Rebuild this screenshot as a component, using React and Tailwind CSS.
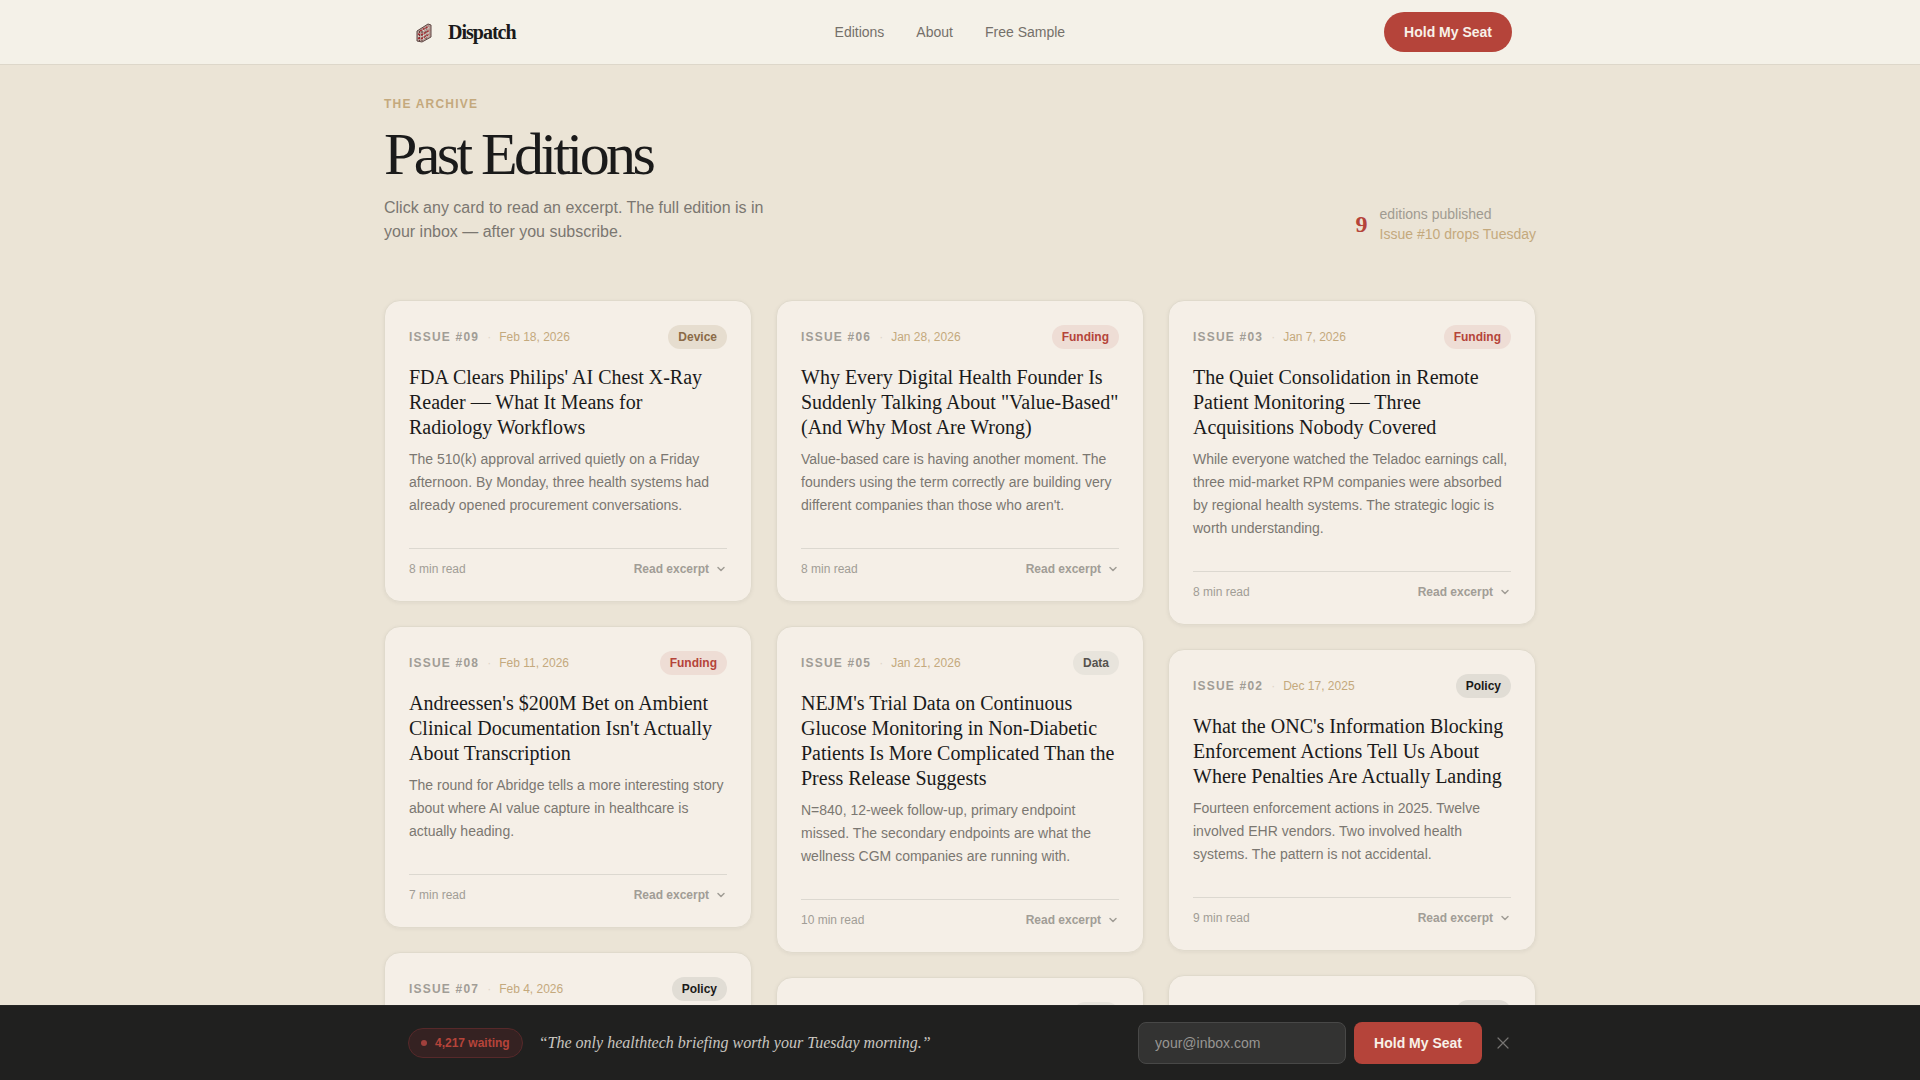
import React from 'react';

const columns = [
  [
    {
      issue: '09',
      date: 'Feb 18, 2026',
      tag: 'Device',
      title: "FDA Clears Philips' AI Chest X-Ray Reader — What It Means for Radiology Workflows",
      text: 'The 510(k) approval arrived quietly on a Friday afternoon. By Monday, three health systems had already opened procurement conversations.',
      minutes: 8
    },
    {
      issue: '08',
      date: 'Feb 11, 2026',
      tag: 'Funding',
      title: "Andreessen's $200M Bet on Ambient Clinical Documentation Isn't Actually About Transcription",
      text: 'The round for Abridge tells a more interesting story about where AI value capture in healthcare is actually heading.',
      minutes: 7
    },
    { issue: '07', date: 'Feb 4, 2026', tag: 'Policy' }
  ],
  [
    {
      issue: '06',
      date: 'Jan 28, 2026',
      tag: 'Funding',
      title: 'Why Every Digital Health Founder Is Suddenly Talking About "Value-Based" (And Why Most Are Wrong)',
      text: "Value-based care is having another moment. The founders using the term correctly are building very different companies than those who aren't.",
      minutes: 8
    },
    {
      issue: '05',
      date: 'Jan 21, 2026',
      tag: 'Data',
      title: "NEJM's Trial Data on Continuous Glucose Monitoring in Non-Diabetic Patients Is More Complicated Than the Press Release Suggests",
      text: 'N=840, 12-week follow-up, primary endpoint missed. The secondary endpoints are what the wellness CGM companies are running with.',
      minutes: 10
    },
    { issue: '04', date: 'Jan 14, 2026', tag: 'Data' }
  ],
  [
    {
      issue: '03',
      date: 'Jan 7, 2026',
      tag: 'Funding',
      title: 'The Quiet Consolidation in Remote Patient Monitoring — Three Acquisitions Nobody Covered',
      text: 'While everyone watched the Teladoc earnings call, three mid-market RPM companies were absorbed by regional health systems. The strategic logic is worth understanding.',
      minutes: 8
    },
    {
      issue: '02',
      date: 'Dec 17, 2025',
      tag: 'Policy',
      title: "What the ONC's Information Blocking Enforcement Actions Tell Us About Where Penalties Are Actually Landing",
      text: 'Fourteen enforcement actions in 2025. Twelve involved EHR vendors. Two involved health systems. The pattern is not accidental.',
      minutes: 9
    },
    { issue: '01', date: 'Dec 10, 2025', tag: 'Policy' }
  ]
];

const tagStyles = {
  Device: 'bg-[#e6ddcf] text-[#8b6b47]',
  Funding: 'bg-[#eeddd5] text-[#b5443a]',
  Policy: 'bg-[#e1ddd5] text-[#1a1a1a]',
  Data: 'bg-[#e8e4dc] text-[#55524e]'
};

const Logo = () => (
  <svg className="w-8 h-8" viewBox="0 0 32 32" fill="none" aria-hidden="true">
    <path d="M9 15 20 8l3 1v12l-9 5-5-1z" fill="#b9a29a" />
    <path d="M9 15 20 8l3 1v12l-9 5-5-1z" stroke="#5e4744" strokeWidth="1" />
    <path d="M14 15v10M18 12v11M11.500 15v10" stroke="#5a3b39" strokeWidth="1" strokeDasharray="2 1" />
    <path d="m10 18 3 1 9-5M10 22l3 1 9-5M12 15l9-5" stroke="#a8282f" strokeWidth="1.400" strokeDasharray="2 1.300" />
    <path d="m10 20 3 1 9-5M15 15l7-4M15 23l7-4" stroke="#f0e6de" strokeWidth="1" strokeDasharray="1.200 1.500" />
  </svg>
);

const Header = () => (
  <header className="fixed inset-x-0 top-0 z-10 bg-[#f4f1e8] border-b border-[#ddd7ca]">
    <div className="max-w-6xl mx-auto px-6 h-16 flex items-center justify-between">
      <a href="#" className="flex items-center gap-2">
        <Logo />
        <span className="font-['Liberation_Serif',serif] text-xl font-bold tracking-tighter">Dispatch</span>
      </a>
      <nav className="flex gap-8 text-sm text-[#74706a]">
        <a href="#editions">Editions</a>
        <a href="#about">About</a>
        <a href="#sample">Free Sample</a>
      </nav>
      <button className="h-10 px-5 rounded-full bg-[#b5443a] text-sm font-bold text-[#f8f1e8]">Hold My Seat</button>
    </div>
  </header>
);

const EditionCard = ({ edition }) => (
  <article className="rounded-2xl border border-[#e0dacc] bg-[#f5efe7] p-6 shadow-[0_1px_4px_rgba(26,26,26,0.06)]">
    <div className="flex items-center justify-between text-xs">
      <div className="flex items-center gap-2">
        <span className="font-bold tracking-widest text-[#a19d96]">ISSUE #{edition.issue}</span>
        <span className="text-[#ddd5c8]">·</span>
        <span className="text-[#c4a97d]">{edition.date}</span>
      </div>
      <span className={`rounded-full px-[10px] py-1 font-bold ${tagStyles[edition.tag]}`}>{edition.tag}</span>
    </div>
    {edition.title && (
      <>
        <h2 className="mt-4 font-['Liberation_Serif',serif] text-xl leading-[25px]">{edition.title}</h2>
        <p className="mt-2 text-sm leading-[23px] text-[#7b7771]">{edition.text}</p>
        <div className="mt-[31px] pt-3 border-t border-[#dcd8d0] flex items-center justify-between text-xs text-[#a19d96]">
          <span>{edition.minutes} min read</span>
          <button className="flex items-center gap-[6px] font-bold">
            Read excerpt
            <svg className="w-3 h-3" viewBox="0 0 12 12" fill="none" stroke="currentColor" strokeWidth="1.5" strokeLinecap="round" strokeLinejoin="round">
              <path d="m3 4.500 3 3 3-3" />
            </svg>
          </button>
        </div>
      </>
    )}
  </article>
);

const SubscribeBar = () => (
  <aside className="fixed inset-x-0 bottom-0 z-10 bg-[#20201f] border-t border-[#262625]">
    <div className="max-w-6xl mx-auto px-6 py-4 flex items-center justify-between">
      <div className="flex items-center gap-4">
        <span className="h-[30px] px-3 flex items-center gap-2 rounded-full border border-[#57292a] bg-[#352222] text-xs font-bold text-[#b5443a]">
          <span className="w-[6px] h-[6px] rounded-full bg-[#a0403c]" />
          4,217 waiting
        </span>
        <p className="font-['Liberation_Serif',serif] italic text-base text-[#c9c6c0]">“The only healthtech briefing worth your Tuesday morning.”</p>
      </div>
      <form className="flex items-center gap-2" onSubmit={(e) => e.preventDefault()}>
        <input
          type="email"
          aria-label="Email address"
          placeholder="your@inbox.com"
          className="w-52 h-[42px] px-4 rounded-lg border border-[#484847] bg-[#333332] text-sm text-white placeholder:text-[#989693]"
        />
        <button className="h-[42px] px-5 rounded-lg bg-[#b5443a] text-sm font-bold text-[#f8f1e8]">Hold My Seat</button>
        <button type="button" aria-label="Dismiss" className="ml-1 text-[#777573]">
          <svg className="w-[18px] h-[18px]" viewBox="0 0 18 18" fill="none" stroke="currentColor" strokeWidth="1.2" strokeLinecap="round">
            <path d="m4 4 10 10M14 4 4 14" />
          </svg>
        </button>
      </form>
    </div>
  </aside>
);

const App = () => {
  return (
    <div className="min-h-screen bg-[#ebe4d6] font-['Liberation_Sans',sans-serif] text-[#1a1a1a]">
      <Header />

      <main className="max-w-6xl mx-auto pt-24">
        <div className="flex items-end justify-between mb-14">
          <div>
            <p className="text-xs font-bold tracking-widest text-[#c4a97d]">THE ARCHIVE</p>
            <h1 className="mt-3 font-['Liberation_Serif',serif] text-6xl leading-none tracking-[-0.06em]">Past Editions</h1>
            <p className="mt-3 max-w-96 text-base text-[#7b7771]">
              Click any card to read an excerpt. The full edition is in your inbox — after you subscribe.
            </p>
          </div>
          <div className="flex items-center gap-3">
            <span className="font-['Liberation_Serif',serif] text-2xl font-bold text-[#b5443a]">9</span>
            <div className="text-sm">
              <p className="text-[#a09b91]">editions published</p>
              <p className="text-[#c4a97d]">Issue #10 drops Tuesday</p>
            </div>
          </div>
        </div>

        <div className="grid grid-cols-3 gap-6 items-start">
          {columns.map((column, i) => (
            <div key={i} className="flex flex-col gap-6">
              {column.map((edition) => (
                <EditionCard key={edition.issue} edition={edition} />
              ))}
            </div>
          ))}
        </div>
      </main>

      <SubscribeBar />
    </div>
  );
};

export default App;
